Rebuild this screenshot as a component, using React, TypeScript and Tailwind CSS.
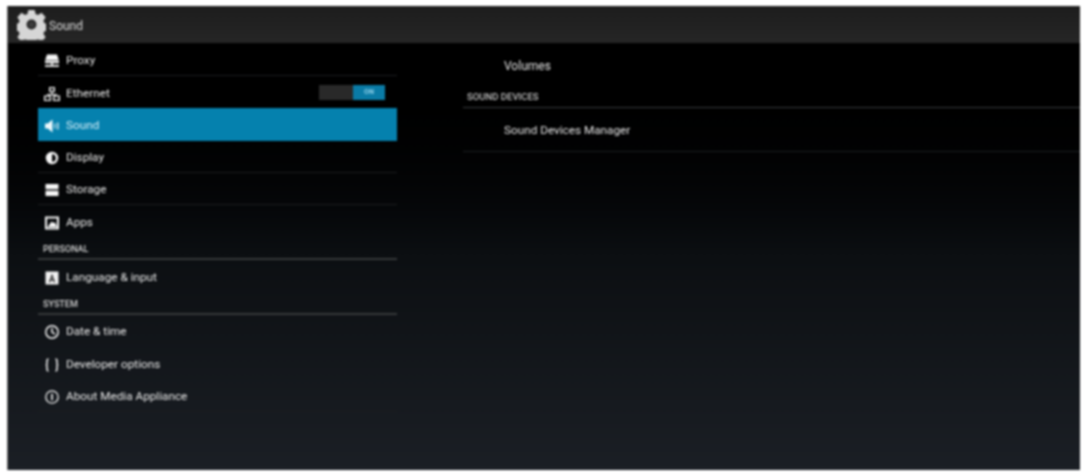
import React from "react";

const I = ({ children }: { children: React.ReactNode }) => (
  <svg viewBox="0 0 16 16" className="w-[16px] h-[16px] shrink-0" fill="currentColor">{children}</svg>
);

const Proxy = () => (
  <I>
    <path d="M3 1.500h10l1.800 5.500H1.200z" />
    <rect x="1" y="7.600" width="14" height="2.600" />
    <rect x="7.200" y="10" width="1.600" height="3" />
    <rect x="1" y="12" width="14" height="1.800" />
  </I>
);
const Ethernet = () => (
  <I>
    <path fillRule="evenodd" d="M5 1h6v5H5zM6.300 2.300v2.400h3.400V2.300z" />
    <rect x="7.400" y="6" width="1.200" height="2.500" />
    <rect x="3" y="8" width="10" height="1.200" />
    <path fillRule="evenodd" d="M0 9.500h7v5.500H0zM1.300 10.800v2.900h4.400v-2.900zM9 9.500h7v5.500H9zM10.300 10.800v2.900h4.400v-2.900z" />
  </I>
);
const Speaker = () => (
  <I>
    <path d="M8.500 1.500v13L3.800 10.500H1V5.500h2.800z" />
    <path d="M10 5.500v5h1.500v-5zM12.800 4.500v7h2v-7z" opacity="0.65" />
  </I>
);
const Display = () => (
  <I>
    <path fillRule="evenodd" d="M8 1.800a6.200 6.200 0 1 1 0 12.400a6.200 6.200 0 0 1 0-12.400zM8 4.200v7.600a3.800 3.800 0 0 0 0-7.600z" />
  </I>
);
const Storage = () => (
  <I>
    <rect x="1.500" y="2" width="13" height="5.300" />
    <rect x="1.500" y="8.700" width="13" height="5.300" />
  </I>
);
const Apps = () => (
  <I>
    <path fillRule="evenodd" d="M1 1.500h14v13H1zM3 3.500v9h10v-9z" />
    <path d="M3.500 12l2-2.500 2-3 2 1.500 1.500-.8 2 4.800z" />
  </I>
);
const Lang = () => (
  <svg viewBox="0 0 16 16" className="w-[16px] h-[16px] shrink-0">
    <rect x="1.500" y="1.500" width="13" height="13" fill="#f2f2f2" />
    <path d="M8 3.800l3.200 8.400H9.700L9.100 10.400H6.900L6.300 12.200H4.800zM8 6.800L7.300 9.200h1.400z" fill="#222" fillRule="evenodd" />
  </svg>
);
const Clock = () => (
  <svg viewBox="0 0 16 16" className="w-[16px] h-[16px] shrink-0" fill="none" stroke="currentColor" strokeWidth="1.500">
    <circle cx="8" cy="8" r="6.200" />
    <path d="M8 4v4.200l3 2" />
  </svg>
);
const Braces = () => (
  <svg viewBox="0 0 16 16" className="w-[16px] h-[16px] shrink-0" fill="none" stroke="currentColor" strokeWidth="1.500">
    <path d="M4.500 2C3 2 3 3 3 4.500v2C3 7.500 2.500 8 1.800 8c.7 0 1.200.5 1.200 1.500v2C3 13 3 14 4.500 14" />
    <path d="M11.500 2C13 2 13 3 13 4.500v2c0 1 .5 1.500 1.200 1.500-.7 0-1.200.5-1.200 1.500v2c0 1.500 0 2.500-1.500 2.500" />
  </svg>
);
const Info = () => (
  <svg viewBox="0 0 16 16" className="w-[16px] h-[16px] shrink-0" fill="none" stroke="currentColor" strokeWidth="1.300">
    <circle cx="8" cy="8" r="6.200" />
    <path d="M8 4.800v6.400" strokeWidth="1.600" />
  </svg>
);
const Gear = () => (
  <svg viewBox="0 0 32 32" className="w-[29px] h-[31px] shrink-0">
    <path
      fill="#d6d6d6"
      fillRule="evenodd"
      d="M12.500 0h7l1 4.500 2.600 1.100 4-2.500 4.500 4.800-2.500 4 1.100 2.600 4.300 1v7l-4.300 1-1.100 2.600 2.500 4-4.500 4.800-4-2.500-2.600 1.100-1 4.500h-7l-1-4.500-2.600-1.100-4 2.500-4.500-4.800 2.500-4-1.100-2.600-4.300-1v-7l4.300-1 1.100-2.600-2.500-4 4.500-4.800 4 2.500L11.500 4.500zM16 10.500a5.500 5.500 0 1 0 0 11a5.500 5.500 0 0 0 0-11z"
    />
    <circle cx="16" cy="16" r="3.500" fill="#3c3c3c" />
  </svg>
);

const Row = ({ icon, label, selected, divider, children }: { icon: React.ReactNode; label: string; selected?: boolean; divider?: boolean; children?: React.ReactNode }) => (
  <div className={`h-[32.400px] flex items-center pl-[6px] pr-[12px] gap-[6px] ${divider ? "border-b border-[#1c1e20]" : ""} ${selected ? "bg-[#0581ae] text-[#d8eef7]" : "text-[#e8e8e8]"}`}>
    <span className={`pt-[3px] ${selected ? "text-[#eef8fc]" : "text-[#f6f6f6]"}`}>{icon}</span>
    <span className="text-[11.750px] flex-1 pt-[3px]">{label}</span>
    {children}
  </div>
);

const Header = ({ label }: { label: string }) => (
  <div className="h-[22.200px] flex items-center border-b-2 border-[#36383a] pl-[5px] pt-[4px] text-[9px] font-medium text-[#d0d0d0]">
    {label}
  </div>
);

export default function App() {
  return (
    <div className="w-[1084px] h-[473px] bg-white pl-[7px] pr-[4px] pt-[6px] pb-[3px] font-['Roboto',sans-serif] overflow-hidden">
      <div className="w-full h-full flex flex-col border-l border-[#6a6a6a] blur-[0.8px]">
        <div className="h-[37px] shrink-0 flex items-center pl-[9px] gap-[3px] bg-gradient-to-b from-[#1d1d1d] to-[#262626]">
          <Gear />
          <span className="text-[12px] text-[#dcdcdc] pt-[2px]">Sound</span>
        </div>
        <div className="flex-1 flex bg-gradient-to-b from-[#000000] via-[#0c0f12] to-[#1b1f25]">
          <div className="w-[359px] ml-[30px] shrink-0 pt-[0.500px]">
            <Row icon={<Proxy />} label="Proxy" divider />
            <Row icon={<Ethernet />} label="Ethernet">
              <div className="w-[66px] h-[15px] bg-[#292929] flex justify-end">
                <div className="w-[32px] h-[15px] bg-[#0a7ba6] text-[7px] font-bold text-[#8fd0e8] flex items-center justify-center">ON</div>
              </div>
            </Row>
            <Row icon={<Speaker />} label="Sound" selected />
            <Row icon={<Display />} label="Display" divider />
            <Row icon={<Storage />} label="Storage" divider />
            <Row icon={<Apps />} label="Apps" />
            <Header label="PERSONAL" />
            <Row icon={<Lang />} label="Language & input" />
            <Header label="SYSTEM" />
            <Row icon={<Clock />} label="Date & time" />
            <Row icon={<Braces />} label="Developer options" />
            <Row icon={<Info />} label="About Media Appliance" divider />
          </div>
          <div className="flex-1 ml-[66px] flex flex-col">
            <div className="h-[43px] flex items-center pl-[41px] text-[12px] text-[#e4e4e4] pt-[2px]">Volumes</div>
            <div className="h-[22px] flex items-center border-b border-[#3a3c3e] pl-[4px] pt-[1px] text-[9.500px] font-medium text-[#c0c0c0]">SOUND DEVICES</div>
            <div className="h-[44px] flex items-center pl-[41px] border-b border-[#1c1f22] text-[11.750px] text-[#e4e4e4] pt-[2px]">Sound Devices Manager</div>
          </div>
        </div>
      </div>
    </div>
  );
}
